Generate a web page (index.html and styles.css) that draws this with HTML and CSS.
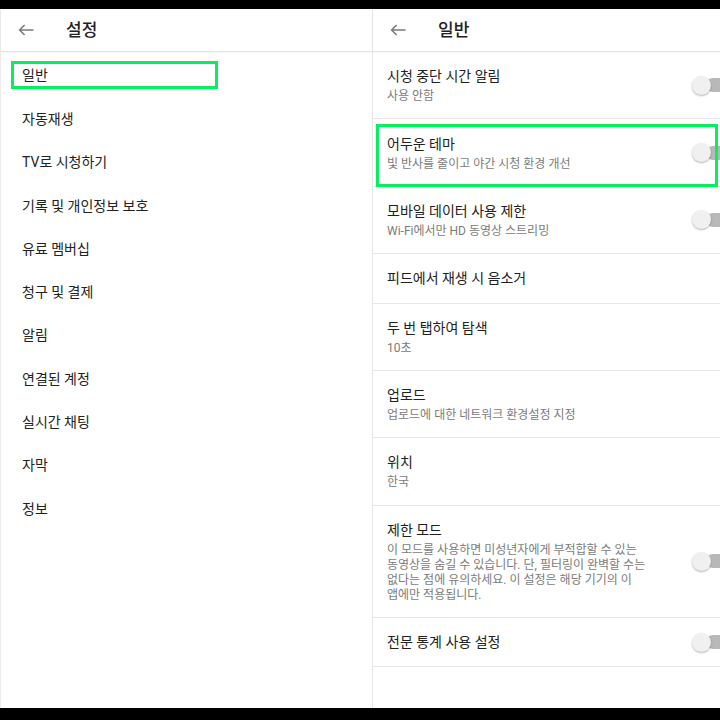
FILE: index.html
```html
<!DOCTYPE html>
<html lang="ko">

<head>
  <meta charset="UTF-8">
  <meta name="viewport" content="width=device-width, initial-scale=1.0">
  <title>설정</title>
  <link rel="stylesheet" href="styles.css">
</head>

<body>
  <div class="screen">

    <!-- 왼쪽: 설정 메뉴 -->
    <section class="pane pane-menu">
      <header class="toolbar">
        <svg class="toolbar-back" width="16" height="12" viewBox="0 0 16 12">
          <path d="M15.5 6H1.6M6.6 1L1.6 6l5 5" />
        </svg>
        <h1 class="toolbar-title">설정</h1>
      </header>

      <ul class="menu">
        <li class="menu-item is-marked"><span class="mark">일반</span></li>
        <li class="menu-item">자동재생</li>
        <li class="menu-item">TV로 시청하기</li>
        <li class="menu-item">기록 및 개인정보 보호</li>
        <li class="menu-item">유료 멤버십</li>
        <li class="menu-item">청구 및 결제</li>
        <li class="menu-item">알림</li>
        <li class="menu-item">연결된 계정</li>
        <li class="menu-item">실시간 채팅</li>
        <li class="menu-item">자막</li>
        <li class="menu-item">정보</li>
      </ul>
    </section>

    <!-- 오른쪽: 일반 -->
    <section class="pane pane-detail">
      <header class="toolbar">
        <svg class="toolbar-back" width="16" height="12" viewBox="0 0 16 12">
          <path d="M15.5 6H1.6M6.6 1L1.6 6l5 5" />
        </svg>
        <h1 class="toolbar-title">일반</h1>
      </header>

      <div class="setting">
        <div class="setting-text">
          <div class="setting-title">시청 중단 시간 알림</div>
          <div class="setting-sub">사용 안함</div>
        </div>
        <span class="switch"></span>
      </div>

      <div class="setting is-marked">
        <div class="setting-text">
          <div class="setting-title">어두운 테마</div>
          <div class="setting-sub">빛 반사를 줄이고 야간 시청 환경 개선</div>
        </div>
        <span class="switch"></span>
      </div>

      <div class="setting">
        <div class="setting-text">
          <div class="setting-title">모바일 데이터 사용 제한</div>
          <div class="setting-sub">Wi-Fi에서만 HD 동영상 스트리밍</div>
        </div>
        <span class="switch"></span>
      </div>

      <div class="setting">
        <div class="setting-text">
          <div class="setting-title">피드에서 재생 시 음소거</div>
        </div>
      </div>

      <div class="setting">
        <div class="setting-text">
          <div class="setting-title">두 번 탭하여 탐색</div>
          <div class="setting-sub">10초</div>
        </div>
      </div>

      <div class="setting">
        <div class="setting-text">
          <div class="setting-title">업로드</div>
          <div class="setting-sub">업로드에 대한 네트워크 환경설정 지정</div>
        </div>
      </div>

      <div class="setting">
        <div class="setting-text">
          <div class="setting-title">위치</div>
          <div class="setting-sub">한국</div>
        </div>
      </div>

      <div class="setting">
        <div class="setting-text setting-text-long">
          <div class="setting-title">제한 모드</div>
          <div class="setting-sub">이 모드를 사용하면 미성년자에게 부적합할 수 있는 동영상을 숨길 수 있습니다. 단, 필터링이 완벽할 수는 없다는 점에 유의하세요. 이 설정은 해당 기기의 이 앱에만 적용됩니다.</div>
        </div>
        <span class="switch"></span>
      </div>

      <div class="setting">
        <div class="setting-text">
          <div class="setting-title">전문 통계 사용 설정</div>
        </div>
        <span class="switch"></span>
      </div>
    </section>

  </div>
</body>

</html>
```

FILE: styles.css
```css
body {
  margin: 0;
  background-color: #000;
  font-family: Roboto, "Noto Sans CJK KR", sans-serif;
  color: #212121;
}

.screen {
  display: flex;
  height: 699px;
  margin-top: 9px;
  background-color: #fff;
  overflow: hidden;
}

.pane {
  height: 100%;
  background-color: #fff;
}

.pane-menu {
  width: 371px;
  flex: none;
  border-left: 1px solid #ececec;
  border-right: 1px solid #e6e6e6;
}

.pane-detail {
  flex: 1;
  min-width: 0;
  overflow: hidden;
}

/* 상단 툴바 */
.toolbar {
  display: flex;
  align-items: center;
  height: 42px;
  padding-left: 17px;
  border-bottom: 1px solid #e4e4e4;
  box-shadow: 0 1px 2px rgba(0, 0, 0, 0.05);
}

.toolbar-back {
  flex: none;
  fill: none;
  stroke: #7a7a7a;
  stroke-width: 1.5;
}

.toolbar-title {
  margin: 0 0 0 32px;
  font-size: 17px;
  font-weight: 500;
  line-height: 22px;
  color: #212121;
}

/* 왼쪽 메뉴 */
.menu {
  list-style: none;
  margin: 0;
  padding: 1px 0 0;
}

.menu-item {
  display: flex;
  align-items: center;
  height: 43.3px;
  padding-left: 21px;
  font-size: 14px;
  color: #222;
}

.mark {
  display: block;
  box-sizing: border-box;
  width: 207px;
  height: 28px;
  margin-left: -11px;
  padding-left: 8px;
  line-height: 22px;
  border: 3px solid #05f05c;
}

/* 오른쪽 설정 항목 */
.setting {
  position: relative;
  display: flex;
  align-items: center;
  padding: 14.2px 0 14.2px 14px;
  border-bottom: 1px solid #e6e6e6;
}

.setting-text {
  flex: 1;
  min-width: 0;
}

.setting-text-long {
  flex: 0 1 276px;
  word-break: keep-all;
}

.setting-title {
  font-size: 14px;
  line-height: 20px;
  color: #212121;
}

.setting-sub {
  margin-top: 3px;
  font-size: 12px;
  line-height: 15px;
  color: #7b7b7b;
}

.setting.is-marked::after {
  content: "";
  position: absolute;
  left: 3px;
  top: 5px;
  width: 342px;
  height: 63px;
  box-sizing: border-box;
  border: 3px solid #05f05c;
}

/* 토글 스위치 (꺼짐) */
.switch {
  position: relative;
  flex: none;
  width: 36px;
  height: 20px;
  margin-left: auto;
  margin-right: -8px;
}

.switch::before {
  content: "";
  position: absolute;
  left: 14px;
  right: 0;
  top: 3px;
  height: 14px;
  border-radius: 7px;
  background-color: #b8b8b8;
}

.switch::after {
  content: "";
  position: absolute;
  left: 0;
  top: 0.5px;
  width: 19px;
  height: 19px;
  border-radius: 50%;
  background-color: #f0f0f0;
  box-shadow: 0 1px 2px rgba(0, 0, 0, 0.3);
}
```
